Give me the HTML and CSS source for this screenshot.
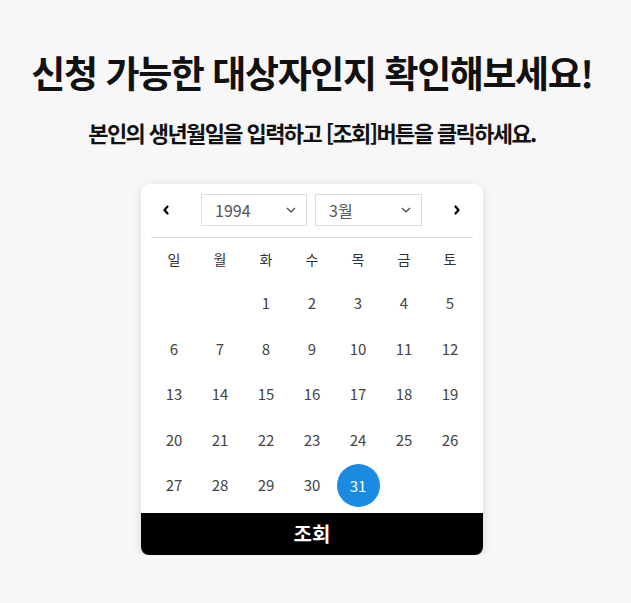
FILE: index.html
```html
<!DOCTYPE html>
<html lang="ko">
<head>
    <meta charset="UTF-8">
    <meta name="viewport" content="width=device-width, initial-scale=1.0">
    <title>신청 대상자 확인</title>
    <link rel="stylesheet" href="styles.css">
</head>
<body>
    <div class="page">
        <h1 class="title">신청 가능한 대상자인지 확인해보세요!</h1>
        <p class="lead">본인의 생년월일을 입력하고 [조회]버튼을 클릭하세요.</p>

        <div class="calendar">
            <div class="cal-head">
                <button class="nav-btn" aria-label="이전 달">
                    <svg width="8" height="10" viewBox="0 0 8 10"><path d="M5.5 1.5 L2.5 5 L5.5 8.5" fill="none" stroke="#000" stroke-width="2.2" stroke-linecap="round" stroke-linejoin="round"/></svg>
                </button>
                <div class="picker picker-year">
                    <select>
                        <option>1993</option>
                        <option selected>1994</option>
                        <option>1995</option>
                    </select>
                    <svg class="caret" width="10" height="6" viewBox="0 0 10 6"><path d="M1 1 L5 5 L9 1" fill="none" stroke="#444" stroke-width="1.2"/></svg>
                </div>
                <div class="picker picker-month">
                    <select>
                        <option>2월</option>
                        <option selected>3월</option>
                        <option>4월</option>
                    </select>
                    <svg class="caret" width="10" height="6" viewBox="0 0 10 6"><path d="M1 1 L5 5 L9 1" fill="none" stroke="#444" stroke-width="1.2"/></svg>
                </div>
                <button class="nav-btn" aria-label="다음 달">
                    <svg width="8" height="10" viewBox="0 0 8 10"><path d="M2.5 1.5 L5.5 5 L2.5 8.5" fill="none" stroke="#000" stroke-width="2.2" stroke-linecap="round" stroke-linejoin="round"/></svg>
                </button>
            </div>

            <div class="weekdays">
                <span>일</span><span>월</span><span>화</span><span>수</span><span>목</span><span>금</span><span>토</span>
            </div>

            <div class="days" id="days"></div>

            <button class="submit">조회</button>
        </div>
    </div>

    <script>
        // March 1994 starts on a Tuesday
        const days = document.getElementById('days');
        const offset = 2;
        const total = 31;
        const picked = 31;
        for (let i = 0; i < offset; i++) {
            days.appendChild(document.createElement('span'));
        }
        for (let d = 1; d <= total; d++) {
            const cell = document.createElement('span');
            cell.className = 'day' + (d === picked ? ' is-picked' : '');
            cell.textContent = d;
            days.appendChild(cell);
        }
    </script>
</body>
</html>
```

FILE: styles.css
```css
body {
    margin: 0;
    background: #f7f7f7;
    font-family: "Noto Sans CJK KR", "Noto Sans", sans-serif;
    color: #111;
}
.page {
    display: flex;
    flex-direction: column;
    align-items: center;
    padding: 46px 7px 0 0;
}
.title {
    margin: 0;
    font-size: 37px;
    font-weight: 700;
    letter-spacing: -1.4px;
    line-height: 52px;
    color: #111;
}
.lead {
    margin: 20px 0 0;
    font-size: 22px;
    font-weight: 600;
    letter-spacing: -1.6px;
    line-height: 28px;
    color: #111;
}
.calendar {
    margin-top: 38px;
    width: 342px;
    box-sizing: border-box;
    background: #fff;
    border-radius: 8px;
    box-shadow: 0 2px 10px rgba(0,0,0,0.13);
    overflow: hidden;
}
.cal-head {
    display: flex;
    align-items: center;
    margin: 10px 10px 0;
    padding-bottom: 11px;
    border-bottom: 1px solid #ddd;
}
.nav-btn {
    width: 30px;
    height: 32px;
    padding: 0;
    border: none;
    background: none;
    display: flex;
    align-items: center;
    justify-content: center;
    cursor: pointer;
}
.picker {
    position: relative;
    height: 32px;
}
.picker-year {
    width: 106px;
    margin-left: 20px;
}
.picker-month {
    width: 107px;
    margin-left: 8px;
    margin-right: 20px;
}
.picker select {
    appearance: none;
    width: 100%;
    height: 100%;
    box-sizing: border-box;
    border: 1px solid #ddd;
    border-radius: 0;
    background: #fff;
    padding: 0 0 0 13px;
    font-family: inherit;
    font-size: 16px;
    color: #555;
    outline: none;
}
.caret {
    position: absolute;
    right: 11px;
    top: 13px;
    pointer-events: none;
}
.weekdays,
.days {
    display: grid;
    grid-template-columns: repeat(7, 46px);
    margin: 0 10px;
}
.weekdays span {
    height: 42px;
    display: flex;
    align-items: center;
    justify-content: center;
    font-size: 14px;
    color: #333;
}
.days {
    grid-auto-rows: 45.5px;
}
.day {
    display: flex;
    align-items: center;
    justify-content: center;
    font-size: 15px;
    color: #444;
}
.day.is-picked {
    width: 43px;
    height: 43px;
    margin: auto;
    border-radius: 50%;
    background: #1a8be0;
    color: #fff;
    position: relative;
    top: 1px;
}
.submit {
    display: block;
    width: 100%;
    height: 42px;
    margin-top: 5px;
    border: none;
    background: #000;
    color: #fff;
    font-family: inherit;
    font-size: 20px;
    font-weight: 700;
    cursor: pointer;
}
```
